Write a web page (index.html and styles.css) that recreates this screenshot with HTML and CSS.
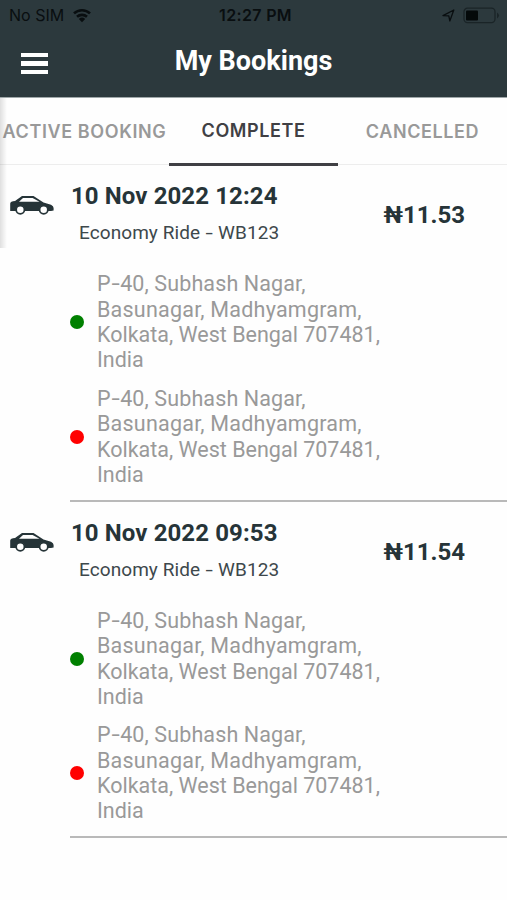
FILE: index.html
```html
<!DOCTYPE html>
<html lang="en">
<head>
    <meta charset="UTF-8">
    <title>My Bookings</title>
    <link rel="stylesheet" href="styles.css">
</head>
<body>
    <header class="header">
        <div class="status-bar">
            <div class="carrier">
                <span>No SIM</span>
                <svg class="wifi" width="20" height="15" viewBox="0 0 20 15">
                    <path d="M2 5.4a11.6 11.6 0 0 1 16 0M5 8.8a7.4 7.4 0 0 1 10 0" fill="none" stroke="#090e10" stroke-width="2.6"/>
                    <path d="M6.8 11a4.8 4.8 0 0 1 6.4 0L10 14.2z" fill="#090e10"/>
                </svg>
            </div>
            <span class="clock">12:27 PM</span>
            <div class="indicators">
                <svg width="13" height="13" viewBox="0 0 13 13">
                    <path d="M1 6.6L11.8 1 7.8 12 6.8 6.8z" fill="none" stroke="#090e10" stroke-width="1.3" stroke-linejoin="round"/>
                </svg>
                <svg width="37" height="17" viewBox="0 0 37 17">
                    <rect x="1" y="1.2" width="31" height="14.4" rx="3.5" fill="none" stroke="#1a2427" stroke-width="1.3"/>
                    <rect x="3" y="3.4" width="12" height="10" rx="1" fill="#04090a"/>
                    <path d="M34 5.5q4 3 0 6z" fill="#1a2427"/>
                </svg>
            </div>
        </div>
        <div class="title-bar">
            <button class="menu-btn" aria-label="Menu"><span></span><span></span><span></span></button>
            <h1>My Bookings</h1>
        </div>
    </header>

    <nav class="tabs">
        <a class="tab">ACTIVE BOOKING</a>
        <a class="tab active">COMPLETE</a>
        <a class="tab">CANCELLED</a>
    </nav>
    <div class="edge-shadow"></div>

    <main class="bookings">
        <section class="booking">
            <svg class="car" width="45" height="21" viewBox="0 0 45 21">
                <path fill="#263438" fill-rule="evenodd" d="M1.2 8.5Q1.2 6.5 4 6.2L6 6 13 1h11.5L34.5 7.4 42 9.8Q44.6 11.2 44.6 13V15.4L42 16H1.2zM10 6.8h20.5L23.6 2.9H14z"/>
                <circle cx="11.3" cy="14.7" r="4.1" fill="#fff" stroke="#263438" stroke-width="1.7"/>
                <circle cx="34.7" cy="14.7" r="4.1" fill="#fff" stroke="#263438" stroke-width="1.7"/>
            </svg>
            <div class="details">
                <div class="summary">
                    <div>
                        <h2>10 Nov 2022 12:24</h2>
                        <p class="ride">Economy Ride <span class="dash">-</span> WB123</p>
                    </div>
                    <span class="price">₦11.53</span>
                </div>
                <div class="stop">
                    <span class="dot pickup"></span>
                    <p><span class="street">P<span class="dash">-</span>40, Subhash Nagar,</span><br><span class="area">Basunagar, Madhyamgram,</span><br>Kolkata, West Bengal 707481,<br>India</p>
                </div>
                <div class="stop">
                    <span class="dot drop"></span>
                    <p><span class="street">P<span class="dash">-</span>40, Subhash Nagar,</span><br><span class="area">Basunagar, Madhyamgram,</span><br>Kolkata, West Bengal 707481,<br>India</p>
                </div>
            </div>
        </section>

        <section class="booking">
            <svg class="car" width="45" height="21" viewBox="0 0 45 21">
                <path fill="#263438" fill-rule="evenodd" d="M1.2 8.5Q1.2 6.5 4 6.2L6 6 13 1h11.5L34.5 7.4 42 9.8Q44.6 11.2 44.6 13V15.4L42 16H1.2zM10 6.8h20.5L23.6 2.9H14z"/>
                <circle cx="11.3" cy="14.7" r="4.1" fill="#fff" stroke="#263438" stroke-width="1.7"/>
                <circle cx="34.7" cy="14.7" r="4.1" fill="#fff" stroke="#263438" stroke-width="1.7"/>
            </svg>
            <div class="details">
                <div class="summary">
                    <div>
                        <h2>10 Nov 2022 09:53</h2>
                        <p class="ride">Economy Ride <span class="dash">-</span> WB123</p>
                    </div>
                    <span class="price">₦11.54</span>
                </div>
                <div class="stop">
                    <span class="dot pickup"></span>
                    <p><span class="street">P<span class="dash">-</span>40, Subhash Nagar,</span><br><span class="area">Basunagar, Madhyamgram,</span><br>Kolkata, West Bengal 707481,<br>India</p>
                </div>
                <div class="stop">
                    <span class="dot drop"></span>
                    <p><span class="street">P<span class="dash">-</span>40, Subhash Nagar,</span><br><span class="area">Basunagar, Madhyamgram,</span><br>Kolkata, West Bengal 707481,<br>India</p>
                </div>
            </div>
        </section>
    </main>
</body>
</html>
```
FILE: styles.css
```css
* { box-sizing: border-box; }
body { margin: 0; height: 900px; overflow: hidden; background: #fefefe; color: #263438; font-family: Roboto, sans-serif; }
h1, h2, p { margin: 0; }
svg { display: block; flex: none; }

.header { height: 98px; background: #2c393d; border-bottom: 1px solid #9fa7a9; }
.status-bar { display: grid; grid-template-columns: 1fr auto 1fr; align-items: center; height: 30px; padding: 0 7px 0 9px; color: #090e10; font: 16px/30px Inter, sans-serif; }
.carrier { display: flex; align-items: center; gap: 8px; }
.clock { font-weight: 600; letter-spacing: 0.35px; margin-left: 2px; }
.indicators { display: flex; align-items: center; justify-content: flex-end; gap: 8px; }
.title-bar { display: grid; grid-template-columns: 70px 1fr 70px; height: 64px; align-items: center; }
.menu-btn { display: flex; flex-direction: column; gap: 4px; width: 27px; margin: 3px 0 0 21px; padding: 0; border: none; background: none; }
.menu-btn span { width: 27px; height: 4.5px; background: #fff; }
h1 { color: #fff; font-size: 27px; font-weight: 700; line-height: 60px; margin-top: -2px; text-align: center; white-space: nowrap; }

.tabs { display: grid; grid-template-columns: repeat(3, 1fr); height: 67px; border-bottom: 1px solid #ededed; }
.tab { display: flex; align-items: center; justify-content: center; height: 68px; padding-top: 1px; color: #999; font: 600 18px Inter, sans-serif; letter-spacing: 0.6px; white-space: nowrap; border-bottom: 3px solid transparent; }
.tab.active { color: #404044; border-bottom-color: #404044; padding-top: 0; }
.edge-shadow { position: absolute; left: 0; top: 98px; width: 7px; height: 150px; background: linear-gradient(to right, rgba(0,0,0,0.12), rgba(0,0,0,0)); }

.booking { display: flex; height: 336.5px; }
.car { margin: 30px 16px 0 9px; }
.details { flex: 1; border-bottom: 2px solid #b9b9b9; }
.summary { display: flex; justify-content: space-between; height: 106px; padding: 17px 42px 0 1px; }
h2 { font-size: 24px; font-weight: 700; line-height: 28px; letter-spacing: 0.1px; white-space: nowrap; }
.ride { margin: 11px 0 0 8px; font-size: 19px; line-height: 24px; letter-spacing: 0.08px; color: #3d484c; white-space: nowrap; }
.price { margin-top: 19px; font-size: 24px; font-weight: 700; line-height: 28px; }
.stop { display: flex; align-items: center; gap: 13px; height: 102px; margin-bottom: 12.5px; }
.stop p { font-size: 21.5px; line-height: 25.4px; color: #999; white-space: nowrap; }
.street { letter-spacing: 0.12px; }
.area { letter-spacing: 0.22px; }
.dash { display: inline-block; width: 0.44em; text-align: center; transform: scaleX(1.4); }
.dot { width: 14px; height: 14px; border-radius: 50%; flex: none; }
.pickup { background: #008000; }
.drop { background: #f00; }
```
